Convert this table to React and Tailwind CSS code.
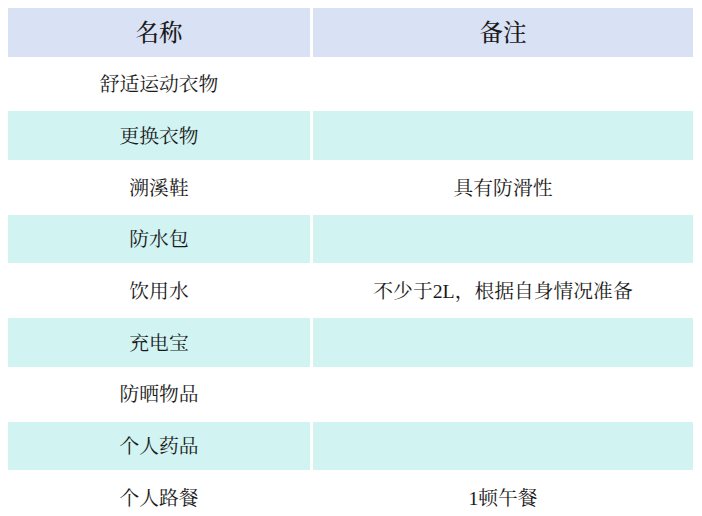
import React from 'react';

const ROWS = [
  { name: '舒适运动衣物', note: '' },
  { name: '更换衣物', note: '' },
  { name: '溯溪鞋', note: '具有防滑性' },
  { name: '防水包', note: '' },
  { name: '饮用水', note: '不少于2L，根据自身情况准备' },
  { name: '充电宝', note: '' },
  { name: '防晒物品', note: '' },
  { name: '个人药品', note: '' },
  { name: '个人路餐', note: '1顿午餐' },
];

const font = { fontFamily: '"Liberation Serif", "Noto Serif CJK SC", "Noto Sans CJK SC", serif' };

export default function App() {
  return (
    <div className="w-[702px] h-[516px] overflow-hidden bg-white pt-[8px] pl-[8px]" style={font}>
      <div className="grid grid-cols-[302px_380px] gap-[3px] auto-rows-[48.7px] text-[#1a1a1a]">
        <div className="bg-[#d9e1f4] flex items-center justify-center text-[23.5px] font-medium pt-[3px]">名称</div>
        <div className="bg-[#d9e1f4] flex items-center justify-center text-[23.5px] font-medium pt-[3px]">备注</div>
        {ROWS.map((row, i) => {
          const bg = i % 2 === 1 ? 'bg-[#d1f3f2]' : 'bg-white';
          return (
            <React.Fragment key={row.name}>
              <div className={`${bg} flex items-center justify-center text-[19.8px] pt-[2px]`}>{row.name}</div>
              <div className={`${bg} flex items-center justify-center text-[19.8px] pt-[2px]`}>{row.note}</div>
            </React.Fragment>
          );
        })}
      </div>
    </div>
  );
}
